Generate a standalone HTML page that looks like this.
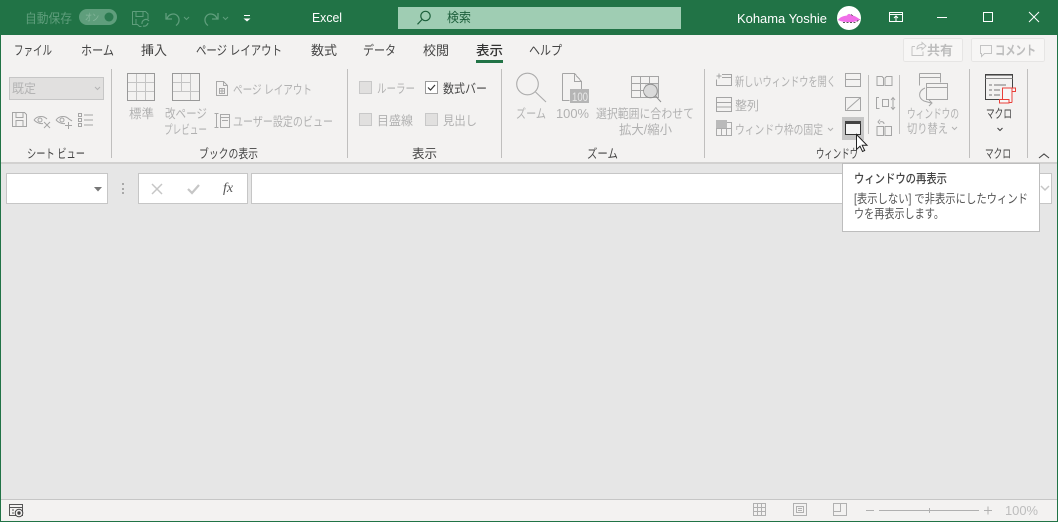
<!DOCTYPE html>
<html lang="ja"><head><meta charset="utf-8"><title>Excel</title>
<style>
html,body{margin:0;padding:0;background:#e6e6e6;width:1058px;height:522px;overflow:hidden}
svg{display:block}
text{font-family:"Liberation Sans","Noto Sans CJK JP",sans-serif;font-size:12px;fill:#a6a6a6}
.t{fill:#444;font-size:13px}
.g{fill:#444;font-size:12.500px}
.d{fill:#b1b1b1;font-size:12.500px}
.i{fill:none;stroke:#a5a5a5;stroke-width:1}
.l{fill:none;stroke:#c4c4c4;stroke-width:1}
.k{fill:none;stroke:#444;stroke-width:1}
.s{stroke:#c0bfbe;stroke-width:1}
</style></head><body>
<svg width="1058" height="522" viewBox="0 0 1058 522" xmlns="http://www.w3.org/2000/svg" shape-rendering="crispEdges">
<rect width="1058" height="522" fill="#e6e6e6"/>
<rect y="35" width="1058" height="127" fill="#f3f2f1"/>
<rect y="162" width="1058" height="2" fill="#d2d1d0"/>
<rect y="0" width="1058" height="35" fill="#217346"/>
<rect y="500" width="1058" height="22" fill="#f3f2f1"/>
<rect y="499" width="1058" height="1" fill="#c6c6c6"/>

<!-- title bar -->
<text x="25" y="23" textLength="47" lengthAdjust="spacingAndGlyphs" style="fill:#5f9e7c;font-size:13px">自動保存</text>
<rect x="79" y="9" width="38" height="16" rx="8" fill="#5f9e7c" shape-rendering="auto"/>
<text x="85" y="21" textLength="14" lengthAdjust="spacingAndGlyphs" style="fill:#86b79c;font-size:10px">オン</text>
<circle cx="109" cy="17" r="4.500" fill="#2b7a50" shape-rendering="auto"/>
<g fill="none" stroke="#5f9e7c" stroke-width="1" shape-rendering="auto">
<path d="M132.500 11.500h13l2.500 2.500v5M136 11.500v5h7v-5M132.500 11.500v13h5l2 2h2M136 19v5"/>
<path d="M142 24a4 4 0 0 1 6-4l1 1M148 23a4 4 0 0 1-5 3" stroke-width="1.200"/>
<path d="M166 13v6h6M167 18.500c2-5 8-6 11-2 2 3 1 7-2 9" stroke-width="1.300"/>
<path d="M184 17l2.500 2.500 2.500-2.500"/>
<path d="M218 13v6h-6M217 18.500c-2-5-8-6-11-2-2 3-1 7 2 9" stroke-width="1.300"/>
<path d="M223 17l2.500 2.500 2.500-2.500"/>
</g>
<path d="M244 15.500h6" stroke="#fff" stroke-width="1"/>
<path d="M243.500 18.500h7l-3.500 3z" fill="#fff" shape-rendering="auto"/>
<text x="312" y="22" textLength="30" lengthAdjust="spacingAndGlyphs" style="fill:#fff;font-size:13px">Excel</text>
<rect x="398" y="7" width="283" height="22" fill="#9fcdb3"/>
<g fill="none" stroke="#1d5f3b" stroke-width="1.200" shape-rendering="auto"><circle cx="425.500" cy="16" r="4.700"/><path d="M422 19.500l-4.500 4.800"/></g>
<text x="447" y="22" textLength="24" lengthAdjust="spacingAndGlyphs" style="fill:#1d5f3b;font-size:13px">検索</text>
<text x="737" y="23" textLength="90" lengthAdjust="spacingAndGlyphs" style="fill:#fff;font-size:13px">Kohama Yoshie</text>
<circle cx="849" cy="18" r="12" fill="#fff" shape-rendering="auto"/>
<path d="M838 20c2-3 5-4 9-4.500 1-2 3-2 4-.500 3 .500 6 2 9 4.500-3 2-7 3-12 2.500-4 0-7-.500-10-2z" fill="#f06ee8" shape-rendering="auto"/>
<path d="M843 22.500h12l5-3M851 14.500l3 2" fill="none" stroke="#222" stroke-width=".7" stroke-dasharray="2 1.500" shape-rendering="auto"/>
<g fill="none" stroke="#fff" stroke-width="1">
<path d="M889.500 12.500h13v9h-13zM889.500 14.500h13"/>
<path d="M896 21v-5M894 18l2-2 2 2" shape-rendering="auto"/>
<path d="M937 17.500h10"/>
<rect x="983.500" y="12.500" width="9" height="9"/>
<path d="M1029 12l10 10M1039 12l-10 10" shape-rendering="auto"/>
</g>

<!-- tabs -->
<text class="t" x="14" y="55" textLength="38" lengthAdjust="spacingAndGlyphs">ファイル</text>
<text class="t" x="81" y="55" textLength="33" lengthAdjust="spacingAndGlyphs">ホーム</text>
<text class="t" x="141" y="55" textLength="26" lengthAdjust="spacingAndGlyphs">挿入</text>
<text class="t" x="196" y="55" textLength="86" lengthAdjust="spacingAndGlyphs">ページ レイアウト</text>
<text class="t" x="311" y="55" textLength="26" lengthAdjust="spacingAndGlyphs">数式</text>
<text class="t" x="363" y="55" textLength="33" lengthAdjust="spacingAndGlyphs">データ</text>
<text class="t" x="423" y="55" textLength="26" lengthAdjust="spacingAndGlyphs">校閲</text>
<text class="t" x="476" y="55" textLength="27" lengthAdjust="spacingAndGlyphs" style="fill:#333;font-weight:500">表示</text>
<text class="t" x="529" y="55" textLength="33" lengthAdjust="spacingAndGlyphs">ヘルプ</text>
<rect x="476" y="60" width="27" height="3" fill="#217346"/>

<!-- share/comment -->
<rect x="903.500" y="38.500" width="59" height="23" rx="2" fill="#f7f6f5" stroke="#e6e5e4"/>
<path d="M912 46.500h3M912 46.500v9h11v-4M917 49c0-3 2-4.500 5-4.500v-2l4 3.500-4 3.500v-2c-3 0-4 1-5 1.500z" fill="none" stroke="#c4c4c4" shape-rendering="auto"/>
<text x="927" y="55" textLength="26" lengthAdjust="spacingAndGlyphs" style="fill:#bdbdbd;font-weight:700;font-size:13px">共有</text>
<rect x="971.500" y="38.500" width="73" height="23" rx="2" fill="#f7f6f5" stroke="#e6e5e4"/>
<path d="M980.500 45.500h11v8h-7l-3 3v-3h-1z" fill="none" stroke="#c4c4c4"/>
<text x="995" y="55" textLength="41" lengthAdjust="spacingAndGlyphs" style="fill:#bdbdbd;font-weight:700;font-size:13px">コメント</text>

<!-- separators -->
<g class="s"><path d="M111.500 69v89M347.500 69v89M501.500 69v89M704.500 69v89M969.500 69v89M1027.500 69v89M868.500 75v59M899.500 75v59"/></g>

<!-- group labels -->
<text class="g" x="27" y="158" textLength="58" lengthAdjust="spacingAndGlyphs">シート ビュー</text>
<text class="g" x="199" y="158" textLength="59" lengthAdjust="spacingAndGlyphs">ブックの表示</text>
<text class="g" x="412" y="158" textLength="25" lengthAdjust="spacingAndGlyphs">表示</text>
<text class="g" x="587" y="158" textLength="31" lengthAdjust="spacingAndGlyphs">ズーム</text>
<text class="g" x="816" y="158" textLength="42" lengthAdjust="spacingAndGlyphs">ウィンドウ</text>
<text class="g" x="985" y="158" textLength="26" lengthAdjust="spacingAndGlyphs">マクロ</text>

<!-- sheet view -->
<rect x="9.500" y="77.500" width="94" height="22" fill="#e1e0df" stroke="#c6c6c6"/>
<text x="12" y="93" textLength="24" lengthAdjust="spacingAndGlyphs" style="fill:#b4b4b4;font-size:13px">既定</text>
<path d="M95 87l2.500 2.500L100 87" fill="none" stroke="#b4b4b4" shape-rendering="auto"/>
<g class="i">
<path d="M12.500 112.500h12l2 2v12h-14zM16 112.500v5h7v-5M16 126.500v-6h7v6"/>
<g shape-rendering="auto"><path d="M34 120c3-4 9-5 13-1M34 120c3 3 6 4 9 3.500"/><circle cx="40" cy="120" r="2"/><path d="M44 122l6 6M50 122l-6 6"/>
<path d="M56 120c3-4 9-5 13-1 1 1 2 1 3 2M56 120c3 3 6 4 9 3.500"/><circle cx="62" cy="120" r="2"/><path d="M68.500 122v7M65 125.500h7"/></g>
<path d="M78.500 113.500h3v3h-3zM78.500 118.500h3v3h-3zM78.500 123.500h3v3h-3zM84 115h9M84 120h9M84 125h9"/>
</g>

<!-- book views -->
<path class="l" d="M127.500 82.500h27M127.500 91.500h27M136.500 73.500v27M145.500 73.500v27"/>
<path class="i" d="M127.500 73.500h27v27h-27z" style="stroke:#999"/>
<path class="l" d="M172.500 82.500h18M172.500 91.500h27M181.500 73.500v18M190.500 73.500v27"/>
<path class="i" d="M172.500 73.500h27v27h-27z" style="stroke:#999"/>
<g class="i" style="stroke:#a9a9a9">
<path d="M216.500 81.500h7l4 4v10h-11zM223.500 81.500v4h4M219.500 88.500h5v5h-5zM222 88.500v5M219.500 91h5"/>
<path d="M214.500 113.500h4M214.500 127.500h4M216.500 113.500v14M220.500 114.500h9v13h-9zM220.500 117.500h9M222 120.500h6"/>
</g>
<text class="d" x="129" y="118" textLength="25" lengthAdjust="spacingAndGlyphs">標準</text>
<text class="d" x="165" y="118" textLength="42" lengthAdjust="spacingAndGlyphs">改ページ</text>
<text class="d" x="164" y="134" textLength="43" lengthAdjust="spacingAndGlyphs">プレビュー</text>
<text class="d" x="233" y="94" textLength="79" lengthAdjust="spacingAndGlyphs">ページ レイアウト</text>
<text class="d" x="233" y="126" textLength="100" lengthAdjust="spacingAndGlyphs">ユーザー設定のビュー</text>

<!-- show -->
<rect x="359.500" y="81.500" width="12" height="12" fill="#e1e0df" stroke="#c8c8c8"/>
<text class="d" x="377" y="93" textLength="38" lengthAdjust="spacingAndGlyphs">ルーラー</text>
<rect x="425.500" y="81.500" width="12" height="12" fill="#fff" stroke="#9a9a9a"/>
<path d="M428 87.500l2.500 2.500 4.500-5" fill="none" stroke="#333" stroke-width="1.200" shape-rendering="auto"/>
<text class="t" x="443" y="93" textLength="44" lengthAdjust="spacingAndGlyphs" style="font-size:12.500px">数式バー</text>
<rect x="359.500" y="113.500" width="12" height="12" fill="#e1e0df" stroke="#c8c8c8"/>
<text class="d" x="377" y="125" textLength="36" lengthAdjust="spacingAndGlyphs">目盛線</text>
<rect x="425.500" y="113.500" width="12" height="12" fill="#e1e0df" stroke="#c8c8c8"/>
<text class="d" x="443" y="125" textLength="34" lengthAdjust="spacingAndGlyphs">見出し</text>

<!-- zoom -->
<g class="i" shape-rendering="auto" style="stroke:#ababab;stroke-width:1.100"><circle cx="527.500" cy="84" r="10.800"/><path d="M535.500 92l10.500 10"/></g>
<g class="i"><path d="M562.500 73.500h12l7 8v8M574.500 73.500v8h7M562.500 73.500v27h7"/></g>
<rect x="570" y="89" width="19" height="14" fill="#b5b5b5"/>
<text x="572" y="101" textLength="16" lengthAdjust="spacingAndGlyphs" style="fill:#e9e9e9;font-size:12px">100</text>
<text class="d" x="516" y="118" textLength="30" lengthAdjust="spacingAndGlyphs">ズーム</text>
<text class="d" x="556" y="118" textLength="33" lengthAdjust="spacingAndGlyphs">100%</text>
<text class="d" x="596" y="118" textLength="98" lengthAdjust="spacingAndGlyphs">選択範囲に合わせて</text>
<text class="d" x="619" y="134" textLength="53" lengthAdjust="spacingAndGlyphs">拡大/縮小</text>
<g class="i"><path d="M631.500 76.500h27v21h-27zM631.500 83.500h27M631.500 90.500h12M640.500 76.500v21M649.500 76.500v7"/></g>
<rect x="645" y="84" width="13" height="13" fill="#dadada"/>
<g class="i" shape-rendering="auto" style="stroke:#8f8f8f"><circle cx="650.500" cy="91" r="6.800"/><path d="M655.500 96l5.500 6"/></g>

<!-- window -->
<g class="i">
<path d="M716.500 76h5M719 73.500v5M722 74.500h9.500v11h-15v-6M722 77.500h9.500"/>
<path d="M716.500 97.500h15v14h-15zM716.500 102.500h15M716.500 107h15"/>
<path d="M716.500 122.500h15v13h-15zM716.500 128.500h15M721.500 121v15M726.500 121v15" style="stroke:#ababab"/>
</g>
<rect x="716" y="120" width="11" height="8" fill="#bababa"/>
<text class="d" x="735" y="86" textLength="101" lengthAdjust="spacingAndGlyphs">新しいウィンドウを開く</text>
<text class="d" x="735" y="110" textLength="24" lengthAdjust="spacingAndGlyphs">整列</text>
<text class="d" x="735" y="134" textLength="88" lengthAdjust="spacingAndGlyphs">ウィンドウ枠の固定</text>
<path d="M828 128l2.500 2.500 2.500-2.500" fill="none" stroke="#b1b1b1" shape-rendering="auto"/>
<g class="i">
<path d="M845.500 73.500h15v13h-15zM845.500 79.500h15"/>
<path d="M845.500 97.500h15v13h-15z"/><path d="M847 109.500l13-11.500" shape-rendering="auto"/>
</g>
<rect x="842" y="117" width="22" height="23" fill="#c6c6c6"/>
<rect x="845.500" y="121.500" width="15" height="13" fill="#f5f5f5" stroke="#333"/>
<rect x="845" y="121" width="16" height="3" fill="#444"/>
<path d="M856.500 134.500v15l3.500-3.300 2.500 5.300 2.200-1-2.500-5.200h4.800z" fill="#fff" stroke="#222" stroke-width="1" shape-rendering="auto"/>
<g class="i">
<path d="M877 76.500h5l1.500 1.500v7.500h-6.500zM885 78l1.500-1.500h5.500v9h-7z"/>
<path d="M879 97.500h-2.500v11h3M882.500 99.500h6v7h-6zM893 98v11M891 100l2-2.500 2 2.500M891 107l2 2.500 2-2.500" shape-rendering="auto"/>
<path d="M877 126.500h6.500v9h-6.500zM885 126.500h6.500v9H885zM880 122c2-1 4 0 4 2M880 119.500l-2 2.500 2 2" shape-rendering="auto"/>
</g>
<g class="i"><path d="M919.500 73.500h21v9M919.500 77.500h21M919.500 73.500v12M926.500 83.500h21v16h-21zM926.500 87.500h21"/>
<path d="M925 88c-7 3-7 10-1 13l7 2M929 100l3 3-3 3" shape-rendering="auto"/></g>
<text class="d" x="907" y="118" textLength="52" lengthAdjust="spacingAndGlyphs">ウィンドウの</text>
<text class="d" x="907" y="133" textLength="41" lengthAdjust="spacingAndGlyphs">切り替え</text>
<path d="M952 127l2.500 2.500 2.500-2.500" fill="none" stroke="#b1b1b1" shape-rendering="auto"/>

<!-- macro -->
<rect x="985" y="74" width="28" height="1.500" fill="#333"/>
<g class="k"><path d="M985.500 74.500h27v25h-27z"/><path d="M985.500 78.500h27" stroke="#888"/></g>
<path d="M989 85h3M994 85h12M989 90h3M994 90h6M989 95h3M994 95h6" stroke="#777" stroke-width="1" stroke-dasharray="none"/>
<rect x="1002" y="88" width="11" height="12" fill="#f7f7f7"/>
<path d="M1002.500 99.500v-11.500h9.500v14.500M1012 88h3.500v3.500h-3.500M999.500 99.500h9.500v3.500h-9.500zM1009 102.500h3" fill="#f7f7f7" stroke="#e8403a" stroke-width="1"/>
<text class="t" x="986" y="118" textLength="26" lengthAdjust="spacingAndGlyphs" style="font-size:12.500px">マクロ</text>
<path d="M997.500 128l2.500 2.500 2.500-2.500" fill="none" stroke="#444" stroke-width="1.100" shape-rendering="auto"/>
<path d="M1039 158l5-4 5 4" fill="none" stroke="#444" stroke-width="1.100" shape-rendering="auto"/>

<!-- formula bar -->
<rect x="6.500" y="173.500" width="101" height="30" fill="#fff" stroke="#c6c6c6"/>
<path d="M94 187h8l-4 4.500z" fill="#777" shape-rendering="auto"/>
<rect x="122" y="183" width="2" height="2" fill="#a8a8a8"/><rect x="122" y="188" width="2" height="2" fill="#a8a8a8"/><rect x="122" y="192" width="2" height="2" fill="#a8a8a8"/>
<rect x="138.500" y="173.500" width="109" height="30" fill="#fff" stroke="#c6c6c6"/>
<path d="M152 184l10 10M162 184l-10 10" stroke="#c6c6c6" stroke-width="1.500" fill="none" shape-rendering="auto"/>
<path d="M188 189l4 4 7-8" stroke="#c6c6c6" stroke-width="2.200" fill="none" shape-rendering="auto"/>
<text x="223" y="192" style="font-family:'Liberation Serif',serif;font-style:italic;font-size:14px;fill:#555">fx</text>
<rect x="251.500" y="173.500" width="800" height="30" fill="#fff" stroke="#c6c6c6"/>
<path d="M1041 186l4 4 4-4" stroke="#c6c6c6" stroke-width="1.500" fill="none" shape-rendering="auto"/>

<!-- tooltip -->
<rect x="842.500" y="163.500" width="197" height="68" fill="#fff" stroke="#bdbdbd"/>
<text x="854" y="183" textLength="93" lengthAdjust="spacingAndGlyphs" style="fill:#444;font-size:12.500px;font-weight:500">ウィンドウの再表示</text>
<text x="854" y="203" textLength="174" lengthAdjust="spacingAndGlyphs" style="fill:#555;font-size:12.500px">[表示しない] で非表示にしたウィンド</text>
<text x="854" y="218" textLength="90" lengthAdjust="spacingAndGlyphs" style="fill:#555;font-size:12.500px">ウを再表示します。</text>

<!-- status bar -->
<g fill="none" stroke="#555"><path d="M9.500 504.500h13v11h-13zM9.500 507.500h13M12 510h2M12 513h2"/></g>
<circle cx="19" cy="513" r="3.800" fill="#f3f2f1" stroke="#444" shape-rendering="auto"/><circle cx="19" cy="513" r="1.700" fill="#444" shape-rendering="auto"/>
<g class="i" style="stroke:#b0b0b0">
<path d="M753.500 503.500h12v12h-12zM753.500 507.500h12M753.500 511.500h12M757.500 503.500v12M761.500 503.500v12"/>
<path d="M793.500 503.500h13v12h-13zM796.500 506.500h7v6h-7zM798 508.500h4M798 510.500h4"/>
<path d="M833.500 503.500h13v12h-13zM833.500 511.500h7v-8"/>
<path d="M866 510.500h8M879 510.500h100M929.500 508v5M984 510.500h8M988 506.500v8"/>
</g>
<text x="1005" y="515" textLength="33" lengthAdjust="spacingAndGlyphs" style="fill:#bdbdbd;font-size:13px">100%</text>

<!-- window border -->
<rect x="0" y="0" width="1" height="522" fill="#217346"/>
<rect x="1057" y="0" width="1" height="522" fill="#217346"/>
<rect x="0" y="521" width="1058" height="1" fill="#217346"/>
</svg>
</body></html>
